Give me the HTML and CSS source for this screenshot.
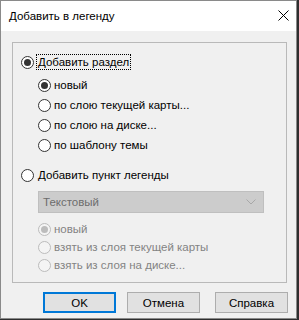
FILE: index.html
```html
<!DOCTYPE html>
<html lang="ru">
<head>
  <meta charset="UTF-8">
  <title>Добавить в легенду</title>
  <link rel="stylesheet" href="styles.css">
</head>
<body>
  <div class="window">
    <div class="titlebar">
      <span class="title">Добавить в легенду</span>
      <svg class="close" width="11" height="11" viewBox="0 0 11 11">
        <path d="M0.5 0.5 L10.5 10.5 M10.5 0.5 L0.5 10.5" stroke="#000" stroke-width="1" fill="none"/>
      </svg>
    </div>

    <div class="content">
      <div class="group">
        <div class="row main first">
          <span class="radio checked"></span>
          <span class="label focus">Добавить раздел</span>
        </div>
        <div class="sub">
          <div class="row"><span class="radio checked"></span><span class="label">новый</span></div>
          <div class="row"><span class="radio"></span><span class="label">по слою текущей карты...</span></div>
          <div class="row"><span class="radio"></span><span class="label">по слою на диске...</span></div>
          <div class="row"><span class="radio"></span><span class="label">по шаблону темы</span></div>
        </div>

        <div class="row main second">
          <span class="radio"></span>
          <span class="label">Добавить пункт легенды</span>
        </div>
        <div class="sub disabled">
          <div class="select">
            <span>Текстовый</span>
            <svg width="10" height="6" viewBox="0 0 10 6">
              <path d="M0.5 0.5 L5 5 L9.5 0.5" stroke="#a8a8a8" stroke-width="1" fill="none"/>
            </svg>
          </div>
          <div class="row tight"><span class="radio checked"></span><span class="label">новый</span></div>
          <div class="row tight"><span class="radio"></span><span class="label">взять из слоя текущей карты</span></div>
          <div class="row tight"><span class="radio"></span><span class="label">взять из слоя на диске...</span></div>
        </div>
      </div>

      <div class="buttons">
        <button class="btn default">OK</button>
        <button class="btn">Отмена</button>
        <button class="btn last">Справка</button>
      </div>
    </div>
  </div>
</body>
</html>
```

FILE: styles.css
```css
body {
  margin: 0;
  background: #2e2e2e;
  font-family: "Liberation Sans", Arial, sans-serif;
  font-size: 11.5px;
  color: #000;
}
.window {
  width: 297px;
  height: 319px;
  box-sizing: border-box;
  border: 1px solid #8a8a8a;
  background: #f0f0f0;
  display: flex;
  flex-direction: column;
}
.titlebar {
  height: 30px;
  background: #fff;
  display: flex;
  align-items: center;
  justify-content: space-between;
  padding: 0 7px 0 8px;
}
.title {
  font-size: 11.5px;
  margin-top: -1px;
}
.close {
  margin-top: -1px;
}
.content {
  flex: 1;
  padding: 11px 8px 0 11px;
}
.group {
  width: 275px;
  height: 241px;
  box-sizing: border-box;
  border: 1px solid #b9b9b9;
  padding: 9px 0 0 8px;
}
.row {
  display: flex;
  align-items: center;
  height: 20px;
}
.row.tight {
  height: 18px;
}
.radio {
  width: 11px;
  height: 11px;
  border: 1px solid #333;
  border-radius: 50%;
  background: #fff;
  display: flex;
  align-items: center;
  justify-content: center;
  flex: none;
}
.radio.checked::after {
  content: "";
  width: 7px;
  height: 7px;
  border-radius: 50%;
  background: #333;
}
.label {
  margin-left: 3px;
  white-space: nowrap;
}
.main .label {
  margin-left: 2px;
  padding: 1px 1px;
  border: 1px dotted transparent;
}
.main .label.focus {
  border-color: #000;
}
.sub {
  padding-left: 17px;
}
.first {
  margin-bottom: 3px;
}
.second {
  margin-top: 10px;
  margin-bottom: 6px;
}
.select {
  width: 226px;
  height: 22px;
  box-sizing: border-box;
  background: #cccccc;
  border: 1px solid #bfbfbf;
  display: flex;
  align-items: center;
  justify-content: space-between;
  padding: 0 7px 0 4px;
  color: #6d6d6d;
  margin-bottom: 7px;
}
.disabled .radio {
  border-color: #bcbcbc;
  background: #f4f4f4;
}
.disabled .radio.checked::after {
  background: #bcbcbc;
}
.disabled .label {
  color: #838383;
}
.buttons {
  display: flex;
  justify-content: flex-end;
  margin-top: 9px;
}
.btn {
  width: 73px;
  height: 21px;
  box-sizing: border-box;
  background: #e1e1e1;
  border: 1px solid #adadad;
  font-family: "Liberation Sans", Arial, sans-serif;
  font-size: 11.5px;
  color: #000;
  padding: 0;
  margin-left: 11px;
}
.btn.last {
  margin-left: 15px;
}
.btn.default {
  border: 2px solid #0078d7;
}
```
